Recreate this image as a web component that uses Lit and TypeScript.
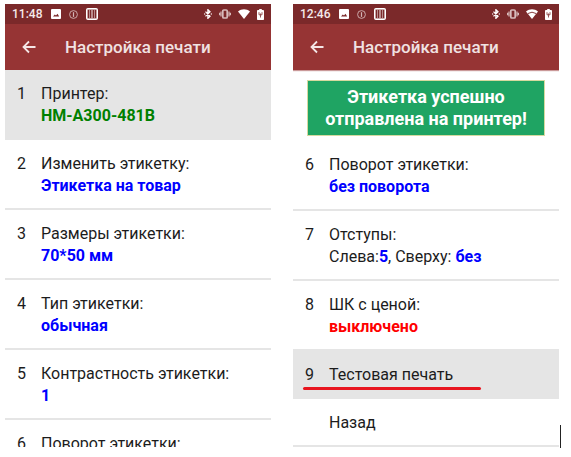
import { LitElement, html, svg, css, nothing, TemplateResult } from "lit";
import { customElement, property } from "lit/decorators.js";
import { classMap } from "lit/directives/class-map.js";

interface Part {
  text: string;
  tone?: "ok" | "value" | "off";
}

interface Item {
  num: string;
  lines: Part[][];
  selected?: boolean;
  marked?: boolean;
}

const setting = (num: string, label: string, value: string, tone: Part["tone"] = "value"): Item => ({
  num,
  lines: [[{ text: label }], [{ text: value, tone }]],
});

const FIRST: Item[] = [
  { ...setting("1", "Принтер:", "HM-A300-481B", "ok"), selected: true },
  setting("2", "Изменить этикетку:", "Этикетка на товар"),
  setting("3", "Размеры этикетки:", "70*50 мм"),
  setting("4", "Тип этикетки:", "обычная"),
  setting("5", "Контрастность этикетки:", "1"),
  { num: "6", lines: [[{ text: "Поворот этикетки:" }]] },
];

const SECOND: Item[] = [
  setting("6", "Поворот этикетки:", "без поворота"),
  {
    num: "7",
    lines: [
      [{ text: "Отступы:" }],
      [{ text: "Слева:" }, { text: "5", tone: "value" }, { text: ", Сверху: " }, { text: "без", tone: "value" }],
    ],
  },
  setting("8", "ШК с ценой:", "выключено", "off"),
  { num: "9", lines: [[{ text: "Тестовая печать" }]], selected: true, marked: true },
  { num: "", lines: [[{ text: "Назад" }]] },
];

const icon = (w: number, h: number, body: TemplateResult) =>
  html`<svg width=${w} height=${h} viewBox="0 0 ${w} ${h}" aria-hidden="true">${body}</svg>`;

const picture = icon(10, 10, svg`<rect width="10" height="10" rx="1" fill="#fff"/>
  <path d="M2 7.600 3.800 5.400 5 6.600 6.500 4.800 8.200 7.600z" fill="#7b292a"/>`);

const info = icon(9, 9, svg`<circle cx="4.5" cy="4.5" r="3.9" fill="none" stroke="#d3b5b5" stroke-width=".9"/>
  <path d="M4.500 2.200v4.700" stroke="#d3b5b5" stroke-width="1.2"/>`);

const barcode = icon(12, 12, svg`<rect x=".6" y=".6" width="10.8" height="10.8" rx="1.4" fill="#b98d8d" stroke="#fff" stroke-width="1.2"/>
  <path d="M2.500 2v8M4.500 2v8M7.500 2v8M9.500 2v8" stroke="#7b292a" stroke-width="1"/>`);

const bluetooth = icon(8, 10, svg`<path d="M1.500 2.600 6 7.200 3.900 9.300V.7L6 2.800 1.500 7.400" fill="none" stroke="#fff" stroke-width="1.3"/>
  <path d="M.7 4.300v1.400M7.300 4.300v1.400" stroke="#fff" stroke-width="1"/>`);

const vibrate = icon(12, 10, svg`<rect x="3.8" y="1" width="4.4" height="8" rx="1" fill="none" stroke="#d8bcbc" stroke-width="1.7"/>
  <path d="M2 2.500v5M10 2.500v5M.6 3.800v2.400M11.400 3.800v2.400" stroke="#d8bcbc" stroke-width="1.2"/>`);

const wifi = (weak: boolean) => icon(12, 10, svg`<path d="M0 2.600C3.600-.4 8.400-.4 12 2.600L6 10z" fill="#fff"/>
  ${weak ? svg`<path d="M2 4.500Q6 1.900 10 4.500" fill="none" stroke="#7b292a" stroke-width=".9"/>` : nothing}`);

const battery = icon(7, 11, svg`<path d="M2.200 0h2.600v1.100H6.200a.8.8 0 0 1 .8.8v8.300a.8.8 0 0 1-.8.8H.8a.8.8 0 0 1-.8-.8V1.900a.8.8 0 0 1 .8-.8h1.400z" fill="#fff"/>
  <path d="M2 3.200v2.600h3V3.200M3.500 4.500v4" fill="none" stroke="#8f4a4b" stroke-width=".9"/>`);

const arrow = icon(14, 14, svg`<path d="M13.500 7H1.500M7 1.500 1.500 7 7 12.500" fill="none" stroke="#f4e6e6" stroke-width="1.8"/>`);

@customElement("phone-screen")
export class PhoneScreen extends LitElement {
  @property() time = "";
  @property() notice = "";
  @property({ type: Boolean }) weak = false;
  @property({ attribute: false }) items: Item[] = [];

  static styles = css`
    :host {
      display: block;
      min-width: 0;
      overflow: hidden;
    }
    svg {
      display: block;
      flex: none;
    }
    .status {
      display: flex;
      align-items: center;
      height: 20px;
      padding: 0 7px;
      background: #7b292a;
      color: #f6eaea;
      font-size: 12px;
      font-weight: 500;
    }
    .group {
      display: flex;
      align-items: center;
      gap: 8px;
    }
    .time {
      margin-right: 1px;
    }
    .system {
      margin-left: auto;
      gap: 7px;
    }
    .bar {
      display: flex;
      align-items: center;
      height: 46px;
      background: #963434;
      color: #f0e2e2;
      box-shadow: 0 1px 1px rgba(150, 52, 52, 0.5);
      position: relative;
    }
    .back {
      display: flex;
      padding: 8px;
      margin: 0 21px 0 9px;
      border: 0;
      background: none;
    }
    h1 {
      margin: 0;
      font-size: 17px;
      line-height: 22px;
      font-weight: 500;
      white-space: nowrap;
    }
    .notice {
      margin: 10px 14px 5px;
      padding: 5px 8px;
      border: 1px solid #d6d9a0;
      background: #1fa463;
      color: #fff;
      font-size: 18px;
      line-height: 22px;
      font-weight: 700;
      text-align: center;
      text-wrap: balance;
    }
    ul {
      list-style: none;
      margin: 0;
      padding: 0;
    }
    .row {
      display: flex;
      width: 100%;
      box-sizing: border-box;
      padding: 13px 12px 11px;
      border: 0;
      border-bottom: 2px solid #e5e5e5;
      background: #fff;
      color: #1c1c1c;
      font: 400 16px/22px Roboto, sans-serif;
      text-align: left;
      position: relative;
    }
    .selected {
      background: #e5e5e5;
    }
    .marked::after {
      content: "";
      position: absolute;
      left: 10px;
      bottom: 7px;
      width: 67%;
      height: 3px;
      border-radius: 2px;
      background: #e8151f;
    }
    .num {
      flex: 0 0 24px;
    }
    .line {
      display: block;
      white-space: nowrap;
    }
    b {
      font-weight: 700;
    }
    .ok {
      color: #008000;
    }
    .value {
      color: #0000ff;
    }
    .off {
      color: #ff0000;
    }
  `;

  private renderItem(item: Item) {
    return html`<li>
      <button class=${classMap({ row: true, selected: !!item.selected, marked: !!item.marked })}>
        <span class="num">${item.num}</span>
        <span>
          ${item.lines.map(
            (line) => html`<span class="line">${line.map((p) => (p.tone ? html`<b class=${p.tone}>${p.text}</b>` : p.text))}</span>`
          )}
        </span>
      </button>
    </li>`;
  }

  render() {
    return html`
      <div class="status">
        <div class="group"><span class="time">${this.time}</span>${picture}${info}${barcode}</div>
        <div class="group system">${bluetooth}${vibrate}${wifi(this.weak)}${battery}</div>
      </div>
      <header class="bar">
        <button class="back" aria-label="Назад">${arrow}</button>
        <h1>Настройка печати</h1>
      </header>
      ${this.notice ? html`<div class="notice" role="status">${this.notice}</div>` : nothing}
      <ul>${this.items.map((i) => this.renderItem(i))}</ul>
    `;
  }
}

@customElement("app-root")
export class AppRoot extends LitElement {
  static styles = css`
    :host {
      display: grid;
      grid-template-columns: 1fr 1fr;
      grid-template-rows: minmax(0, 1fr);
      gap: 22px;
      box-sizing: border-box;
      height: 100vh;
      padding: 4px 12px 10px 5px;
      background: #fff;
      font-family: Roboto, sans-serif;
      position: relative;
    }
    .caret {
      position: absolute;
      right: 10px;
      bottom: 9px;
      width: 1px;
      height: 23px;
      background: #222;
    }
  `;

  render() {
    return html`
      <phone-screen time="11:48" .items=${FIRST}></phone-screen>
      <phone-screen time="12:46" weak notice="Этикетка успешно отправлена на принтер!" .items=${SECOND}></phone-screen>
      <span class="caret"></span>
    `;
  }
}
